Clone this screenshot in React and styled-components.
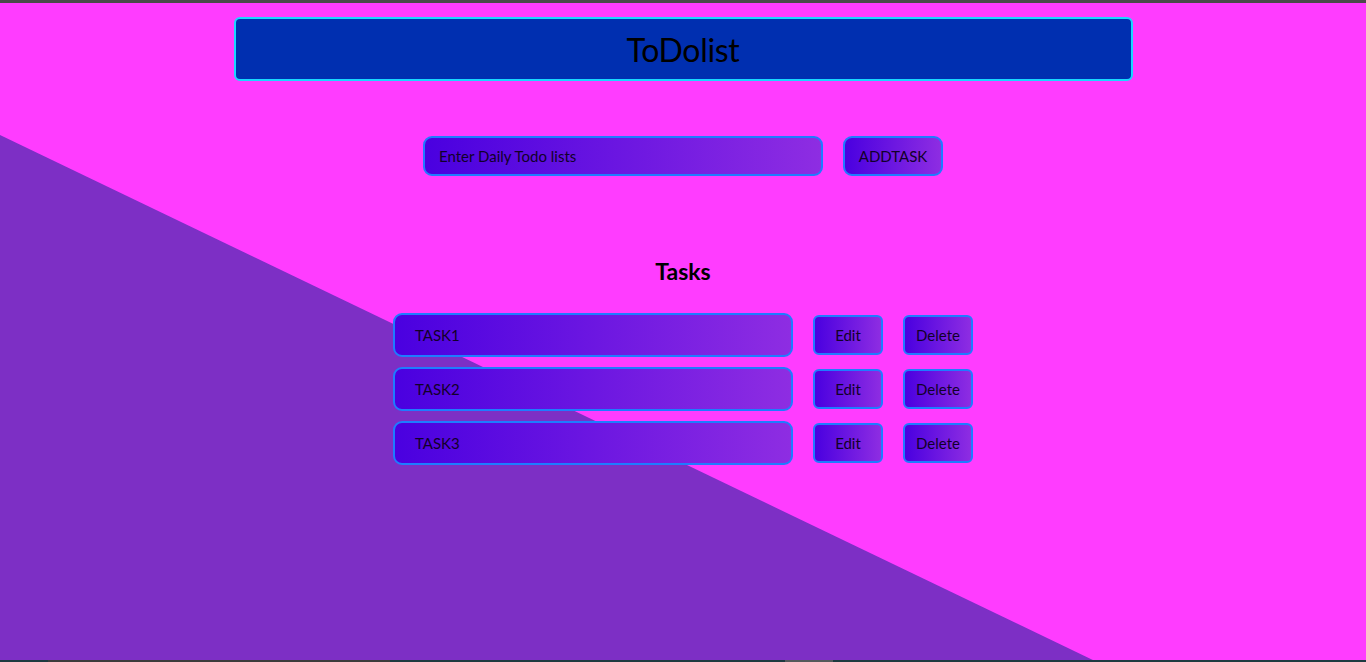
import styled, { createGlobalStyle } from "styled-components";

const GlobalStyle = createGlobalStyle`
  html, body {
    margin: 0;
    padding: 0;
    height: 100%;
  }
  body {
    background: #ff3cff;
    font-family: "Gill Sans", Lato, "Liberation Sans", sans-serif;
    color: #000;
    overflow: hidden;
  }
`

const Page = styled.div`
  position: relative;
  height: 662px;
  box-sizing: border-box;
  border-top: 3px solid #4a4a4a;
  display: flex;
  flex-direction: column;
  align-items: center;

  &::before {
    content: "";
    position: absolute;
    inset: 0;
    background: #7d2fc5;
    clip-path: polygon(0 132px, 1097px 100%, 0 100%);
    z-index: 0;
  }
`

const Content = styled.div`
  position: relative;
  z-index: 1;
  flex: 1;
  display: flex;
  flex-direction: column;
  align-items: center;
  width: 100%;
  padding-top: 14px;
`

const Header = styled.header`
  width: 899px;
  height: 64px;
  box-sizing: border-box;
  background: #002fb0;
  border: 2px solid #19d8ff;
  border-radius: 6px;
  display: flex;
  align-items: center;
  justify-content: center;

  h1 {
    margin: 0;
    font-size: 32px;
    font-weight: 400;
    letter-spacing: -0.3px;
  }
`

const Form = styled.form`
  display: flex;
  gap: 20px;
  margin-top: 55px;
`

const gradient = `
  background: linear-gradient(90deg, #4a00e0, #8e2de2);
  border: 2px solid #1e7cff;
  box-sizing: border-box;
  color: #12002a;
  font-family: inherit;
`

const Input = styled.input`
  ${gradient}
  width: 400px;
  height: 40px;
  border-radius: 9px;
  padding: 0 14px;
  font-size: 15px;
  outline: none;

  &::placeholder {
    color: #12002a;
    opacity: 1;
  }
`

const Button = styled.button`
  ${gradient}
  width: ${props => props.w || 70}px;
  height: 40px;
  border-radius: ${props => props.r || 6}px;
  font-size: 15px;
  padding: 0;
  cursor: pointer;
`

const Title = styled.h2`
  margin: 81px 0 0;
  font-size: 23px;
  font-weight: 700;
`

const List = styled.div`
  display: flex;
  flex-direction: column;
  gap: 10px;
  margin-top: 28px;
`

const Row = styled.div`
  display: flex;
  align-items: center;
  gap: 20px;
`

const TaskBox = styled.div`
  ${gradient}
  width: 400px;
  height: 44px;
  border-radius: 9px;
  padding: 0 20px;
  display: flex;
  align-items: center;
  font-size: 15px;
`

const BottomBar = styled.div`
  position: relative;
  z-index: 1;
  height: 2px;
  width: 100%;
  display: flex;
  background: #1e3a40;
`

const BarSeg = styled.div`
  width: ${props => props.w}px;
  margin-left: ${props => props.ml}px;
  background: ${props => props.c};
`

const tasks = ["TASK1", "TASK2", "TASK3"];

export default function App() {
  return (
    <>
      <GlobalStyle />
      <Page>
        <Content>
          <Header>
            <h1>ToDolist</h1>
          </Header>

          <Form onSubmit={e => e.preventDefault()}>
            <Input placeholder="Enter Daily Todo lists" />
            <Button type="submit" w={100} r={9}>ADDTASK</Button>
          </Form>

          <Title>Tasks</Title>

          <List>
            {tasks.map(t => (
              <Row key={t}>
                <TaskBox>{t}</TaskBox>
                <Button>Edit</Button>
                <Button>Delete</Button>
              </Row>
            ))}
          </List>
        </Content>
        <BottomBar>
          <BarSeg w={342} ml={48} c="#3c3c3c" />
          <BarSeg w={48} ml={395} c="#555a5c" />
        </BottomBar>
      </Page>
    </>
  );
}
